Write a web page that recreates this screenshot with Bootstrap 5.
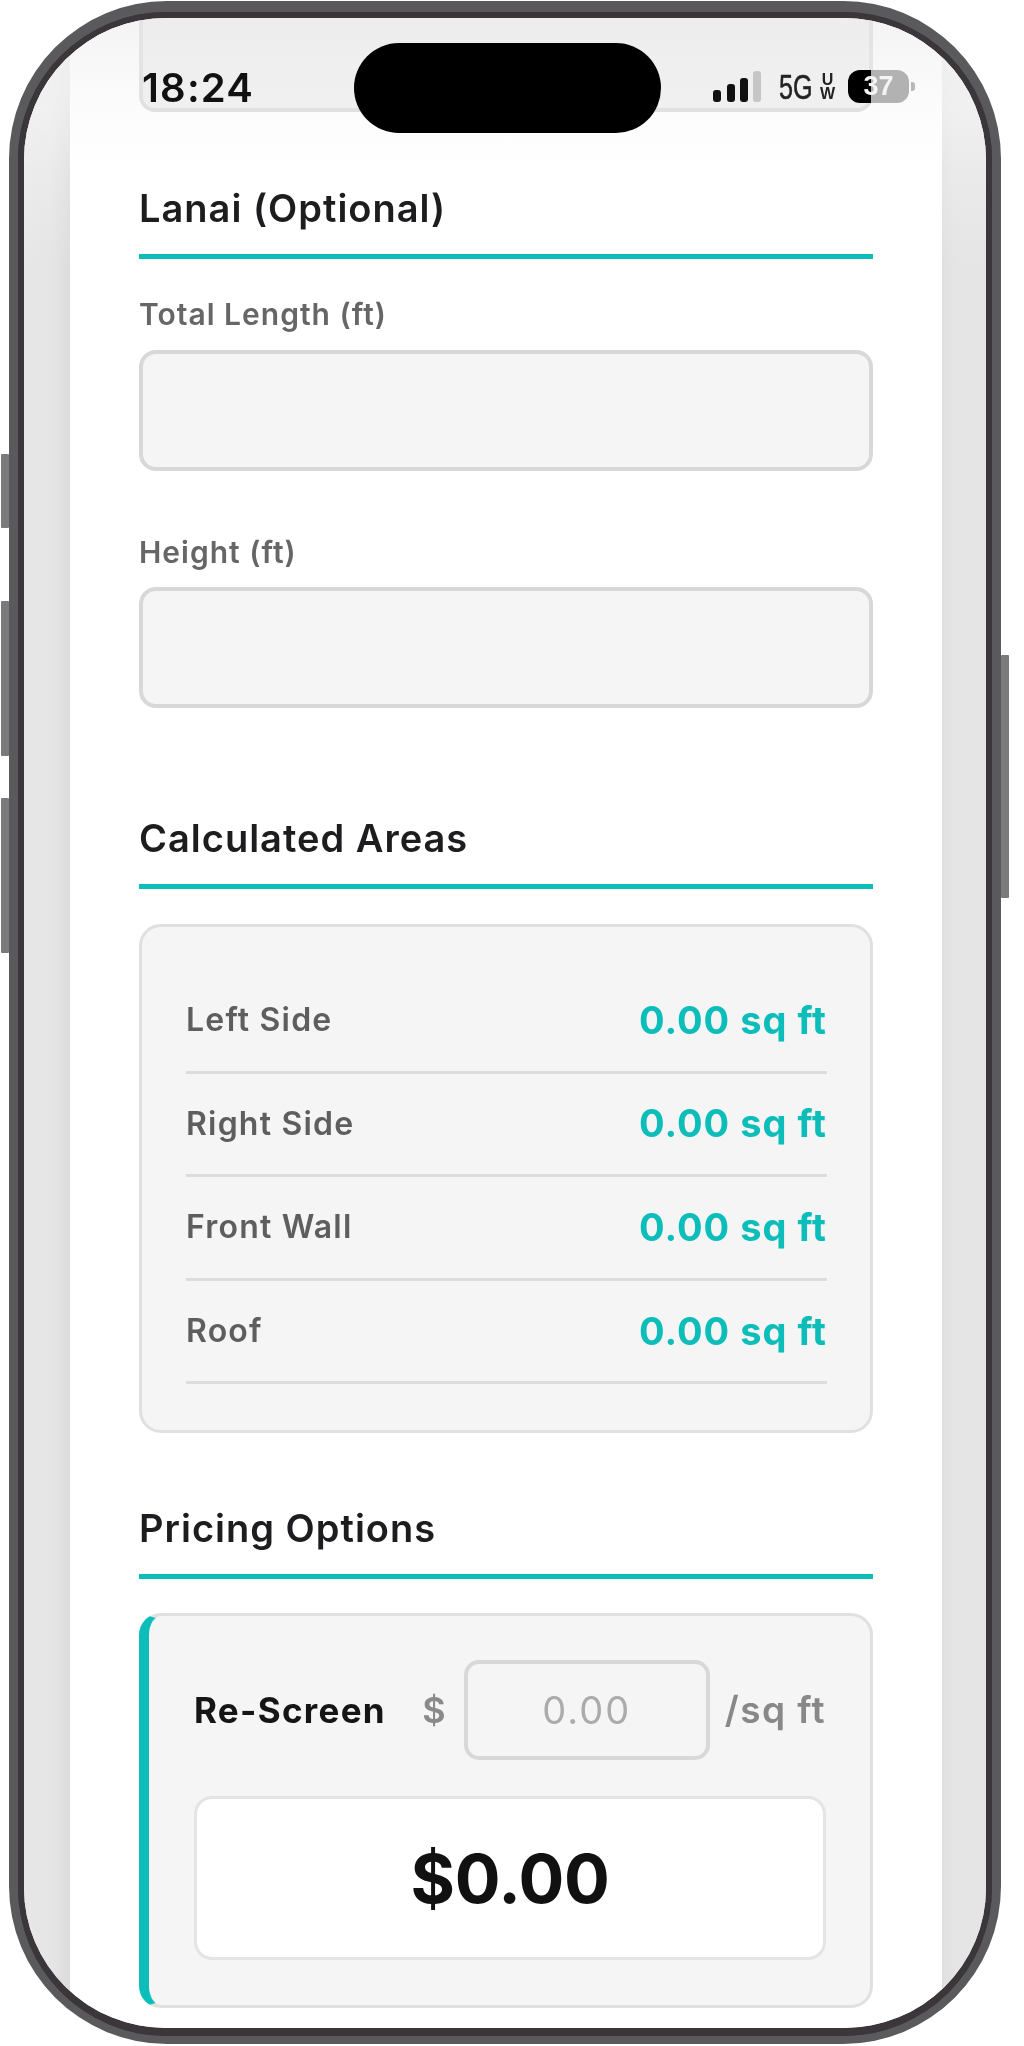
<!DOCTYPE html>
<html lang="en">
<head>
<meta charset="utf-8">
<title>Lanai calculator</title>
<link href="https://cdn.jsdelivr.net/npm/bootstrap@5.3.0/dist/css/bootstrap.min.css" rel="stylesheet">
<style>
html,body{margin:0;background:#fff;height:2046px;overflow:hidden}
body{font-family:Inter,"Liberation Sans",sans-serif}
.phone{position:relative;width:992px;height:2043px;margin:1px 0 0 9px;border-style:solid;border-color:#5a5a5c;border-width:11px 9px 8px 9px;border-radius:158px;background:#3a3639}
.side-btn{position:absolute;background:#7b7b7b;width:8px;border-radius:1px}
.btn-a{left:-17px;top:442px;height:74px}
.btn-b{left:-17px;top:589px;height:155px}
.btn-c{left:-17px;top:786px;height:155px}
.btn-d{right:-17px;left:auto;top:643px;height:243px}
.screen{position:relative;height:100%;border:solid #3a3639;border-width:6px 6px 8px 6px;border-radius:148px;overflow:hidden;background:#e5e5e5}
.gutter-shade{background:linear-gradient(180deg,rgba(255,255,255,.55) 0,rgba(255,255,255,0) 250px),linear-gradient(90deg,#e7e7e7 0,#e5e5e5 60%,#dcdcdc 100%);width:46px;flex:0 0 46px}
.gutter-shade-r{background:linear-gradient(180deg,rgba(255,255,255,.55) 0,rgba(255,255,255,0) 250px),linear-gradient(90deg,#e0e0e0 0,#e5e5e5 30%);width:44px;flex:0 0 44px}
.page-col{flex:1 1 auto;background:#fff;padding:0 69px;filter:blur(.7px)}
.peek-card{height:94px;border:4px solid #d8d8d8;border-top:0;border-radius:0 0 16px 16px;background:#eee}
.sec-head{font-weight:600;font-size:38px;line-height:40px;color:#1d1d1f;padding-bottom:26px;border-bottom:5px solid #0cbdba;margin:0;letter-spacing:1px}
.h-a{margin-top:76px}
.h-b{margin-top:110px}
.h-c{margin-top:75px}
.fld-label{display:block;font-size:30px;line-height:30px;font-weight:600;color:#666;margin:40px 0 21px;letter-spacing:1px}
.fld-label.next{margin:66px 0 20px}
.fld-input{height:121px;background:#f5f5f5;border:4px solid #d8d8d8;border-radius:17px;box-shadow:none}
.area-card{margin-top:35px;height:509px;background:#f5f5f5;border:3px solid #e0e0e0;border-radius:22px;padding:43px 43px 0 44px}
.area-row{height:103.6px;border-bottom:3px solid #dcdcdc;font-size:32px;font-weight:600;color:#5e5e5e;letter-spacing:1.2px}
.area-val{font-size:38px;font-weight:700;color:#0cbdba;letter-spacing:1px}
.price-card{margin-top:34px;height:395px;background:#f5f5f5;border:3px solid #e0e0e0;border-left:10px solid #0cbdba;border-radius:22px;padding:44px 44px 0 45px}
.price-row{height:100px}
.price-name{font-size:35px;font-weight:700;color:#151515;letter-spacing:1.3px}
.price-dollar{font-size:36px;font-weight:600;color:#8a8a8a;margin-right:18px}
.price-input{width:246px;height:100px;flex:none;background:#f5f5f5;border:4px solid #d8d8d8;border-radius:15px;font-size:38px;letter-spacing:2px;text-align:center;color:#aaa;font-family:inherit}
.price-input::placeholder{color:#ababab;opacity:1}
.price-unit{font-size:37px;font-weight:600;color:#888;margin-left:15px;letter-spacing:1.4px}
.price-total{margin-top:36px;height:164px;background:#fff;border:3px solid #e4e4e4;border-radius:18px;font-size:68px;font-weight:700;color:#111;letter-spacing:-.4px}
.status-veil{position:absolute;left:0;right:0;top:0;height:152px;background:linear-gradient(180deg,rgba(236,236,236,.6) 0,rgba(240,240,240,.5) 28%,rgba(245,245,245,.3) 60%,rgba(255,255,255,0) 100%)}
.island{position:absolute;left:330px;top:25px;width:307px;height:90px;background:#000;border-radius:45px}
.clock{position:absolute;left:118px;top:46px;font-size:40px;line-height:47px;font-weight:600;letter-spacing:1.2px;color:#111;filter:blur(.5px)}
.status-right{position:absolute;left:689px;top:52px;height:33px;gap:17px;filter:blur(.4px)}
.net{display:inline-block;width:32px;font-family:"Liberation Sans",sans-serif;font-size:35px;line-height:30px;color:#222;-webkit-text-stroke:.5px #222;transform:scaleX(.72);transform-origin:left center}
.net-sm{font-family:"Liberation Sans",sans-serif;font-size:16px;line-height:14px;font-weight:700;color:#222;margin-left:9px}
.batt{position:relative;width:61px;height:33px;border-radius:12px;margin-left:-4px;background:linear-gradient(90deg,#000 0,#000 38%,#b2b2b2 38%,#b2b2b2 100%);color:#f4f4f4;font-family:"Liberation Sans",sans-serif;font-weight:700;font-size:27px;line-height:33px;text-align:center}
.batt-nub{position:absolute;right:-6px;top:12px;width:4px;height:9px;border-radius:0 3px 3px 0;background:#b8b8b8}
</style>
</head>
<body>
<div class="phone">
  <span class="side-btn btn-a"></span><span class="side-btn btn-b"></span><span class="side-btn btn-c"></span><span class="side-btn btn-d"></span>
  <div class="screen">
    <div class="d-flex h-100">
      <div class="gutter-shade"></div>
      <main class="page-col">
        <div class="peek-card"></div>

        <h2 class="sec-head h-a">Lanai (Optional)</h2>
        <label class="fld-label">Total Length (ft)</label>
        <input class="form-control fld-input" type="text" aria-label="Total Length">
        <label class="fld-label next">Height (ft)</label>
        <input class="form-control fld-input" type="text" aria-label="Height">

        <h2 class="sec-head h-b">Calculated Areas</h2>
        <div class="area-card">
          <div class="area-row d-flex justify-content-between align-items-center"><span>Left Side</span><span class="area-val">0.00 sq ft</span></div>
          <div class="area-row d-flex justify-content-between align-items-center"><span>Right Side</span><span class="area-val">0.00 sq ft</span></div>
          <div class="area-row d-flex justify-content-between align-items-center"><span>Front Wall</span><span class="area-val">0.00 sq ft</span></div>
          <div class="area-row d-flex justify-content-between align-items-center"><span>Roof</span><span class="area-val">0.00 sq ft</span></div>
        </div>

        <h2 class="sec-head h-c">Pricing Options</h2>
        <div class="price-card">
          <div class="price-row d-flex align-items-center">
            <span class="price-name me-auto">Re-Screen</span>
            <span class="price-dollar">$</span>
            <input class="form-control price-input" type="text" placeholder="0.00" aria-label="Price per square foot">
            <span class="price-unit">/sq ft</span>
          </div>
          <div class="price-total d-flex justify-content-center align-items-center">$0.00</div>
        </div>
      </main>
      <div class="gutter-shade-r"></div>
    </div>

    <div class="status-veil"></div>
    <div class="clock">18:24</div>
    <div class="island"></div>
    <div class="status-right d-flex align-items-center">
      <svg width="49" height="31" viewBox="0 0 49 31" aria-hidden="true">
        <rect x="0" y="19" width="8" height="12" rx="3" fill="#111"/>
        <rect x="14" y="13" width="8" height="18" rx="3" fill="#111"/>
        <rect x="27" y="7" width="8" height="24" rx="3" fill="#111"/>
        <rect x="40" y="0" width="8" height="31" rx="3" fill="#c6c6c6"/>
      </svg>
      <div class="d-flex align-items-center">
        <span class="net">5G</span>
        <span class="net-sm d-flex flex-column align-items-center"><span>U</span><span>W</span></span>
      </div>
      <div class="batt">37<span class="batt-nub"></span></div>
    </div>
  </div>
</div>
<script src="https://cdn.jsdelivr.net/npm/bootstrap@5.3.0/dist/js/bootstrap.bundle.min.js"></script>
</body>
</html>
